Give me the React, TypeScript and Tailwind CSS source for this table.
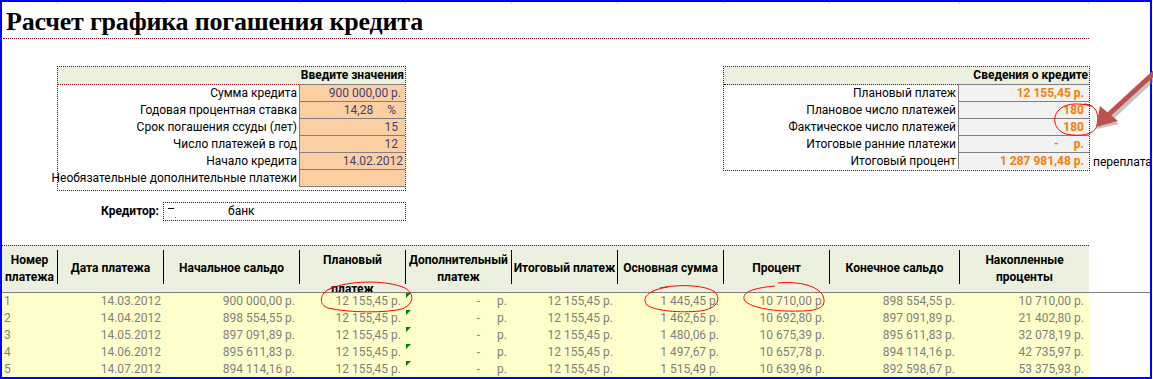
import React from "react";

const colW = [
  "w-[56px]",
  "w-[106px]",
  "w-[136px]",
  "w-[106px]",
  "w-[106px]",
  "w-[106px]",
  "w-[106px]",
  "w-[106px]",
  "w-[130px]",
  "w-[129px]",
];

const rows: string[][] = [
  ["1", "14.03.2012", "900 000,00 р.", "12 155,45 р.", "", "12 155,45 р.", "1 445,45 р.", "10 710,00 р.", "898 554,55 р.", "10 710,00 р."],
  ["2", "14.04.2012", "898 554,55 р.", "12 155,45 р.", "", "12 155,45 р.", "1 462,65 р.", "10 692,80 р.", "897 091,89 р.", "21 402,80 р."],
  ["3", "14.05.2012", "897 091,89 р.", "12 155,45 р.", "", "12 155,45 р.", "1 480,06 р.", "10 675,39 р.", "895 611,83 р.", "32 078,19 р."],
  ["4", "14.06.2012", "895 611,83 р.", "12 155,45 р.", "", "12 155,45 р.", "1 497,67 р.", "10 657,78 р.", "894 114,16 р.", "42 735,97 р."],
  ["5", "14.07.2012", "894 114,16 р.", "12 155,45 р.", "", "12 155,45 р.", "1 515,49 р.", "10 639,96 р.", "892 598,67 р.", "53 375,93 р."],
];

const headers: string[][] = [
  ["Номер", "платежа"],
  ["Дата платежа"],
  ["Начальное сальдо"],
  ["Плановый", "платеж"],
  ["Дополнительный", "платеж"],
  ["Итоговый платеж"],
  ["Основная сумма"],
  ["Процент"],
  ["Конечное сальдо"],
  ["Накопленные", "проценты"],
];

function InputRow({ label, children, pr }: { label: string; children: React.ReactNode; pr: string }) {
  return (
    <div className="flex h-[17px]">
      <div className="w-[241px] shrink-0 flex justify-end pr-[2px] leading-[16px] whitespace-nowrap">
        <span>{label}</span>
      </div>
      <div className={`flex-1 h-[17px] border-l border-b border-[#7f7f7f] bg-[#fccfa3] text-[#3f3f76] leading-[16px] flex justify-end ${pr}`}>
        {children}
      </div>
    </div>
  );
}

function InfoRow({ label, children, last }: { label: string; children: React.ReactNode; last?: boolean }) {
  return (
    <div className="flex h-[17px]">
      <div className="w-[234px] shrink-0 flex justify-end pr-[2px] leading-[16px] whitespace-nowrap">
        <span>{label}</span>
      </div>
      <div
        className={
          last
            ? "flex-1 h-[16px] border-l border-[#7f7f7f] bg-[#f2f2f2] text-[#fa7d00] font-bold leading-[16px] flex justify-end pr-[5px]"
            : "flex-1 h-[17px] border-l border-b border-[#7f7f7f] bg-[#f2f2f2] text-[#fa7d00] font-bold leading-[16px] flex justify-end pr-[5px]"
        }
      >
        {children}
      </div>
    </div>
  );
}

export default function App() {
  return (
    <div className="relative w-[1153px] h-[379px] bg-white overflow-hidden font-['Roboto',sans-serif] text-[12px] text-black">
      <div className="w-[1152px] h-[379px] border-2 border-[#0000ff] flex flex-col overflow-hidden">
        {/* faint gridline ticks */}
        <div className="flex h-[2px] shrink-0">
          {colW.map((w, i) => (
            <div key={i} className={`${w} shrink-0 h-[2px] border-r border-[#d4d8e2]`} />
          ))}
        </div>

        {/* title */}
        <div className="ml-[1px] w-[1086px] h-[35px] shrink-0 border-b border-dotted border-[#7f0000] pl-[3px]">
          <h1 className="font-['Liberation_Serif',serif] font-bold text-[26px] tracking-[-0.2px] leading-[35px] whitespace-nowrap">
            Расчет графика погашения кредита
          </h1>
        </div>

        {/* blocks */}
        <div className="flex items-start mt-[27px] shrink-0">
          {/* input block */}
          <div className="ml-[55px] w-[349px] border border-dotted border-[#7f0000] pb-[3px] shrink-0">
            <div className="flex h-[18px] bg-[#ebf1de]">
              <div className="w-[241px] shrink-0 border-b border-dotted border-[#7f0000]" />
              <div className="flex-1 border-b border-[#7f7f7f] text-right font-bold leading-[17px] pr-[1px] whitespace-nowrap">
                Введите значения
              </div>
            </div>
            <InputRow label="Сумма кредита" pr="pr-[4px]">900 000,00 р.</InputRow>
            <InputRow label="Годовая процентная ставка" pr="pr-[9px]">
              <span>14,28</span>
              <span className="ml-[14px]">%</span>
            </InputRow>
            <InputRow label="Срок погашения ссуды (лет)" pr="pr-[7px]">15</InputRow>
            <InputRow label="Число платежей в год" pr="pr-[7px]">12</InputRow>
            <InputRow label="Начало кредита" pr="pr-[2px]">14.02.2012</InputRow>
            <InputRow label="Необязательные дополнительные платежи" pr="pr-[2px]">
              {""}
            </InputRow>
          </div>

          {/* info block */}
          <div className="ml-[317px] flex items-end shrink-0">
            <div className="w-[367px] border border-dotted border-[#7f0000] shrink-0">
              <div className="flex h-[18px] bg-[#ebf1de]">
                <div className="w-[234px] shrink-0 border-b border-dotted border-[#7f0000]" />
                <div className="flex-1 border-b border-[#7f7f7f] text-right font-bold leading-[17px] pr-[1px] whitespace-nowrap">
                  Сведения о кредите
                </div>
              </div>
              <InfoRow label="Плановый платеж">12 155,45 р.</InfoRow>
              <InfoRow label="Плановое число платежей">180</InfoRow>
              <InfoRow label="Фактическое число платежей">180</InfoRow>
              <InfoRow label="Итоговые ранние платежи">
                <span>-</span>
                <span className="ml-[15px]">р.</span>
              </InfoRow>
              <InfoRow label="Итоговый процент" last>
                1 287 981,48 р.
              </InfoRow>
            </div>
            <div className="pl-[3px] leading-[16px] mb-[1px] whitespace-nowrap">переплата</div>
          </div>
        </div>

        {/* creditor */}
        <div className="flex mt-[11px] ml-[55px] shrink-0">
          <div className="w-[106px] text-right pr-[4px] font-bold leading-[19px]">Кредитор:</div>
          <div className="w-[243px] h-[19px] border border-dotted border-[#7f0000] flex items-start">
            <div className="ml-[4px] mt-[5px] w-[6px] h-[1px] bg-black" />
            <div className="ml-[1px] mt-[14px] w-[1px] h-[1px] bg-[#555]" />
            <div className="ml-[52px] leading-[17px]">банк</div>
          </div>
        </div>

        {/* table */}
        <div className="mt-[24px] w-full border-b border-[#7f7f7f] shrink-0">
          <div className="w-[1087px] h-[47px] border-t border-dotted border-[#7f0000] bg-[#ebf1de] flex overflow-hidden">
            {headers.map((h, i) => (
              <div key={i} className={`${colW[i]} shrink-0 flex h-[46px]`}>
                {i === 3 ? (
                  <div className="flex-1 flex flex-col items-center pt-[6px] font-bold leading-[17px] overflow-hidden">
                    <span>{h[0]}</span>
                    <span className="mt-[12px]">{h[1]}</span>
                  </div>
                ) : (
                  <div className="flex-1 flex flex-col items-center justify-center font-bold leading-[17px] text-center whitespace-nowrap pb-[1px]">
                    {h.map((t, j) => (
                      <span key={j}>{t}</span>
                    ))}
                  </div>
                )}
                {i < 9 ? <div className="w-px h-[34px] bg-black mt-[4px] shrink-0" /> : null}
              </div>
            ))}
          </div>
        </div>
        <div className="flex flex-col shrink-0">
          {rows.map((r, ri) => (
            <div key={ri} className="w-[1087px] h-[17px] bg-[#ffffcc] flex text-[#7f7f7f] leading-[17px]">
              {r.map((c, ci) => {
                if (ci === 0) {
                  return (
                    <div key={ci} className={`${colW[ci]} shrink-0 pl-[2px]`}>
                      {c}
                    </div>
                  );
                }
                if (ci === 4) {
                  return (
                    <div key={ci} className={`${colW[ci]} shrink-0 relative flex justify-end pr-[5px]`}>
                      <div className="absolute left-0 top-0 w-0 h-0 border-t-[5px] border-t-[#008000] border-r-[5px] border-r-transparent" />
                      <span>-</span>
                      <span className="ml-[17px]">р.</span>
                    </div>
                  );
                }
                return (
                  <div
                    key={ci}
                    className={`${colW[ci]} shrink-0 text-right whitespace-nowrap ${ci === 1 ? "pr-[3px]" : "pr-[5px]"}`}
                  >
                    {c}
                  </div>
                );
              })}
            </div>
          ))}
        </div>
      </div>

      {/* annotations */}
      <svg className="absolute left-0 top-0 pointer-events-none" width="1153" height="379" viewBox="0 0 1153 379">
        <g fill="none" stroke="#ff0000" strokeWidth="1">
          <path d="M330,289 C345,281 385,279 405,288 C415,294 414,304 402,309 C385,313 350,313 328,308 C319,305 320,296 326,291 L334,286" />
          <path d="M660,288 C680,284 705,285 715,292 C722,300 716,309 700,311 C680,313 655,311 647,305 C641,298 648,290 668,287" />
          <path d="M778,283 C800,281 818,286 823,296 C827,306 820,311 800,311 C775,312 752,308 745,301 C740,293 752,288 775,286" />
          <path d="M1084,104 C1096,104 1100,115 1097,126 C1094,135 1080,137 1066,134 C1054,130 1052,118 1058,111 C1064,104 1074,102 1092,106" />
        </g>
        <g>
          <line x1="1155" y1="74" x2="1109" y2="117" stroke="#8a8a8a" strokeOpacity="0.5" strokeWidth="5" transform="translate(1,2)" />
          <polygon points="1096,127 1100,107 1118,122" fill="#8a8a8a" fillOpacity="0.5" transform="translate(1,2)" />
          <line x1="1155" y1="72" x2="1107" y2="116" stroke="#c0504d" strokeWidth="5" />
          <polygon points="1096,127 1100,106 1118,121" fill="#c0504d" />
        </g>
      </svg>
    </div>
  );
}
